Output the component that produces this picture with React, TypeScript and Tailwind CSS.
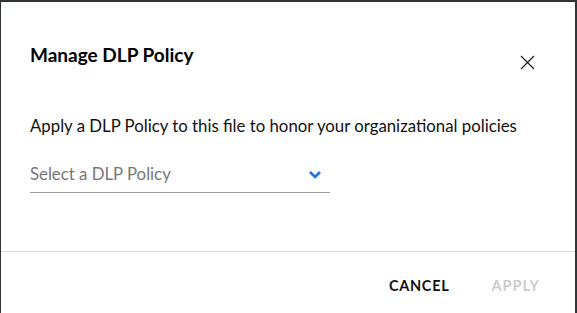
import React from 'react';

const font = { fontFamily: '"Lato", "Open Sans", sans-serif' };

export default function App() {
  return (
    <div className="w-[577px] h-[313px] bg-[#2f3438] pt-[2px] pl-px pr-[2px] overflow-hidden" style={font}>
      <div className="bg-white h-full flex flex-col">
        {/* Header */}
        <div className="flex items-start justify-between pl-[29px] pr-[40px] pt-[41px]">
          <h2 className="text-[19px] font-bold text-black leading-[24px]">Manage DLP Policy</h2>
          <button className="mt-[12px] text-[#222]" aria-label="Close">
            <svg width="15" height="15" viewBox="0 0 15 15" fill="none" stroke="currentColor" strokeWidth="1.3">
              <path d="M1 1L14 14M14 1L1 14" />
            </svg>
          </button>
        </div>

        {/* Body */}
        <div className="pl-[29px] pt-[45px] flex-1">
          <p className="text-[16.8px] text-[#111] leading-[22px]">
            Apply a DLP Policy to this file to honor your organizational policies
          </p>
          <div className="mt-[26px] w-[300px] border-b border-[#9a9a9a] flex items-center justify-between pb-[7px]">
            <span className="text-[16.8px] text-[#777] leading-[22px]">Select a DLP Policy</span>
            <svg className="mr-[8px]" width="14" height="9" viewBox="0 0 14 9" fill="none" stroke="#1a73e8" strokeWidth="2.6">
              <path d="M2 2L7 7L12 2" />
            </svg>
          </div>
        </div>

        {/* Footer */}
        <div className="border-t border-[#dcdcdc] h-[62px] flex items-center justify-end pt-[6px] pr-[35px] gap-[42px]">
          <button className="text-[14.5px] font-bold tracking-[0.7px] text-[#111]">CANCEL</button>
          <button className="text-[14.5px] font-bold tracking-[1px] text-[#cccccc]">APPLY</button>
        </div>
      </div>
    </div>
  );
}
